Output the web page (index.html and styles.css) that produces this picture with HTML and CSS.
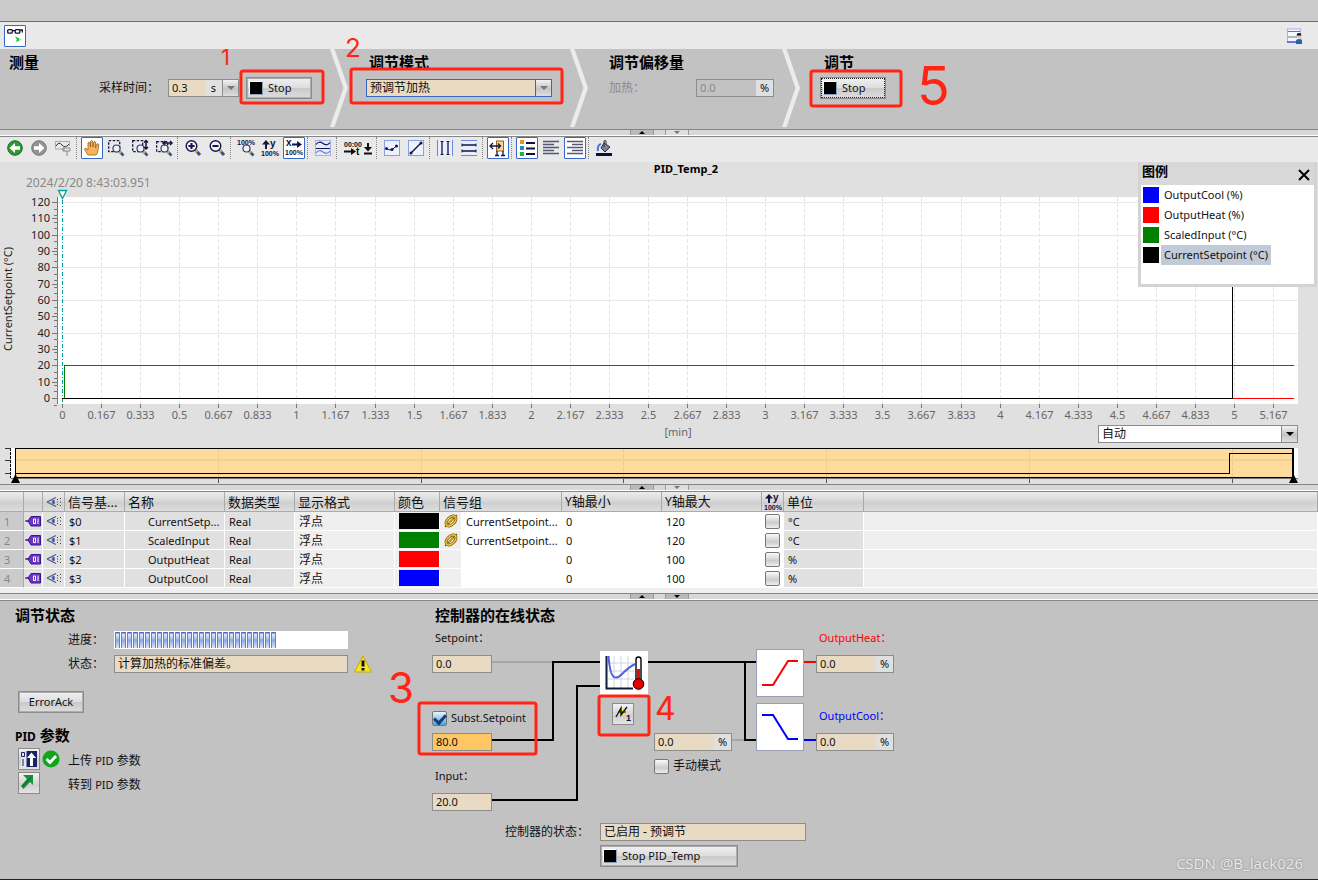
FILE: index.html
```html
<!DOCTYPE html>
<html lang="zh-CN">
<head>
<meta charset="utf-8">
<title>PID_Temp_2</title>
<link rel="stylesheet" href="styles.css">
</head>
<body>
<div class="strip"></div>
<header class="topbar">
  <button class="tool on" aria-label="监视"><svg width="16" height="16"><g fill="none" stroke="#10103c" stroke-width="1.3"><rect x=".7" y="1.6" width="4.600" height="3.600" rx="1"/><rect x="8.2" y="1.6" width="4.600" height="3.600" rx="1"/><path d="M5 2.600h3M12.800 2h2.500v2.500"/></g><path d="M8 8.500l7 3-7 3.500 2-3.200z" fill="#c5d5cc"/><path d="M8 8.500l4 1.700v2.600L9 13.500l1-2z" fill="#18c832"/></svg></button>
  <button class="tool" aria-label="用户视图"><svg width="16" height="16"><rect x="1.500" y="1" width="13" height="13" fill="#f4f7ff" stroke="#a5b2e6"/><path d="M2 3.500h12M2 9h9" stroke="#6c7896"/><path d="M1 14h14" stroke="#4658d0" stroke-width="1.500"/><circle cx="13" cy="8" r="2.400" fill="#eec48f"/><path d="M10.600 7.500a2.400 2.400 0 0 1 4.800 0z" fill="#10103c"/><path d="M10 16v-3q0-2 3-2t3 2v3z" fill="#1d68a6"/></svg></button>
</header>

<main>
<section class="steps">
  <div class="step first">
    <h2>测量</h2>
    <div class="line">
      <label for="sample" class="cjk">采样时间：</label>
      <div class="field sample"><input id="sample" value="0.3"><span class="unit">s</span><button class="drop" aria-label="展开"><i class="tri"></i></button></div>
      <button class="btn stop"><i class="square"></i>Stop</button>
    </div>
  </div>
  <svg class="chevron" width="18" height="78"><path d="M0 0h4.500L18 39 4.500 78H0L13.500 39z"/></svg>
  <div class="step mode">
    <h2>调节模式</h2>
    <div class="combo blue"><select aria-label="调节模式"><option>预调节加热</option></select><span class="drop"><i class="tri"></i></span></div>
  </div>
  <svg class="chevron" width="18" height="78"><path d="M0 0h4.500L18 39 4.500 78H0L13.500 39z"/></svg>
  <div class="step offset">
    <h2>调节偏移量</h2>
    <div class="line"><label for="off" class="cjk">加热：</label><div class="field dim"><input id="off" value="0.0" disabled><span class="unit">%</span></div></div>
  </div>
  <svg class="chevron" width="18" height="78"><path d="M0 0h4.500L18 39 4.500 78H0L13.500 39z"/></svg>
  <div class="step tune">
    <h2>调节</h2>
    <button class="btn stop focus"><i class="square"></i>Stop</button>
  </div>
</section>

<div class="splitter"><button aria-label="向上"><i class="tri up"></i></button><button class="pale" aria-label="向下"><i class="tri"></i></button></div>

<nav class="tools">
  <button class="tool" aria-label="后退"><svg width="16" height="16"><circle cx="8" cy="8" r="7.300" fill="#2f9a35" stroke="#176c1e"/><path d="M2.500 8L8 3v3.200h5v3.600H8V13z" fill="#fff"/></svg></button>
  <button class="tool" aria-label="前进"><svg width="16" height="16"><circle cx="8" cy="8" r="7.300" fill="#939393" stroke="#777"/><path d="M13.500 8L8 3v3.200H3v3.600h5V13z" fill="#fff"/></svg></button>
  <button class="tool" aria-label="固定曲线"><svg width="16" height="16" fill="none"><path d="M0 1.500h15M.500 1v8H8M14.500 1v5" stroke="#aaa"/><path d="M1 6q3-5 6-1t7-1" stroke="#333"/><path d="M8 8h7v3H8zM9 8v3M12 11v5" stroke="#888"/></svg></button>
  <i class="sep"></i>
  <button class="tool on" aria-label="移动"><svg width="16" height="16"><path d="M4 15L.500 9.500q0-1.500 1.500-1L4 10V3q1-1.500 2 0l.600 4V1.200q1-1.500 2 0L9 7l.800-5q1.200-1.200 1.900.200L11.400 8l1.600-4q1.400-.700 1.700.500L14 10q0 3-2 5z" fill="#f4b659" stroke="#9a5f16" stroke-width=".800"/></svg></button>
  <button class="tool" aria-label="框选缩放"><svg width="16" height="16"><rect x=".700" y=".700" width="11" height="11" fill="none" stroke="#151547" stroke-width="1.300" stroke-dasharray="2.500 1.500"/><use href="#lens"/></svg></button>
  <button class="tool" aria-label="垂直缩放"><svg width="16" height="16"><rect x=".700" y=".700" width="10" height="11" fill="none" stroke="#151547" stroke-width="1.300" stroke-dasharray="2.500 1.500"/><use href="#lens"/><path d="M14 0v9M12 2.500L14 .500l2 2M12 7l2 2 2-2" stroke="#151547" stroke-width="1.500" fill="none"/></svg></button>
  <button class="tool" aria-label="水平缩放"><svg width="16" height="16"><rect x=".700" y="1.700" width="11" height="10" fill="none" stroke="#151547" stroke-width="1.300" stroke-dasharray="2.500 1.500"/><use href="#lens"/><path d="M7 3h9M9 1L7 3l2 2M14 1l2 2-2 2" stroke="#151547" stroke-width="1.500" fill="none"/></svg></button>
  <i class="sep"></i>
  <button class="tool" aria-label="放大"><svg width="16" height="16"><path d="M11 10.500l4 4.500" stroke="#24529c" stroke-width="3"/><path d="M10 9.500l2.500 2.700" stroke="#e7a23b" stroke-width="2.500"/><circle cx="6.500" cy="6" r="5.300" fill="#edf2fb" stroke="#151547" stroke-width="1.400"/><path d="M3.500 6h6M6.500 3v6" stroke="#151547" stroke-width="2"/></svg></button>
  <button class="tool" aria-label="缩小"><svg width="16" height="16"><path d="M11 10.500l4 4.500" stroke="#24529c" stroke-width="3"/><path d="M10 9.500l2.500 2.700" stroke="#e7a23b" stroke-width="2.500"/><circle cx="6.500" cy="6" r="5.300" fill="#edf2fb" stroke="#151547" stroke-width="1.400"/><path d="M3.500 6h6" stroke="#151547" stroke-width="2"/></svg></button>
  <i class="sep"></i>
  <button class="tool" aria-label="全部显示"><svg width="16" height="16"><text x="-1" y="5" class="pix">100%</text><use href="#lens"/></svg></button>
  <button class="tool" aria-label="Y轴缩放"><svg width="16" height="16"><use href="#yscale"/><text x="8" y="7" class="pixy">y</text><text x="-1" y="16" class="pix">100%</text></svg></button>
  <button class="tool on" aria-label="X轴缩放"><svg width="16" height="16"><text x="0" y="6" class="pixy">x</text><path d="M6 4.500h6" stroke="#151547" stroke-width="2"/><path d="M11 1l5 3.500L11 8z" fill="#151547"/><text x="-1" y="15" class="pix">100%</text></svg></button>
  <i class="sep"></i>
  <button class="tool" aria-label="分开曲线"><svg width="16" height="16"><rect x=".500" y=".500" width="15" height="15" fill="#e6ecfc" stroke="#a3b2e4"/><path d="M1 4.500q3-4 7-1t7-1M1 8.500h14" stroke="#151547" stroke-width="1.200" fill="none"/><path d="M1 13q3-4 7-1t7-1" stroke="#6a7de0" stroke-width="1.200" fill="none"/></svg></button>
  <i class="sep"></i>
  <button class="tool wide" aria-label="时间格式"><svg width="28" height="16"><text x="0" y="7" class="pix dark">00:00</text><path d="M0 11.500h8" stroke="#111" stroke-width="2"/><path d="M7 8l5 3.500L7 15z" fill="#111"/><text x="12" y="15" class="pixy dark">t</text><path d="M24 3v5M20 13.500h8" stroke="#111" stroke-width="2"/><path d="M20 7h8l-4 4.500z" fill="#111"/></svg></button>
  <i class="sep"></i>
  <button class="tool" aria-label="点连线"><svg width="16" height="16"><rect x=".500" y=".500" width="15" height="15" fill="#edf2ff" stroke="#8b9de2"/><path d="M2 8.500l4 1.500 3-1 4-3.500" stroke="#151547" fill="none"/><g fill="#151547"><circle cx="2.500" cy="8.500" r="1.500"/><circle cx="8" cy="9.500" r="1.500"/><circle cx="12.500" cy="6" r="1.500"/></g></svg></button>
  <button class="tool" aria-label="直线"><svg width="16" height="16"><rect x=".500" y=".500" width="15" height="15" fill="#edf2ff" stroke="#8b9de2"/><path d="M3 13L13 3" stroke="#151547" stroke-width="1.500"/><circle cx="3" cy="13" r="1.500" fill="#151547"/><circle cx="13" cy="3" r="1.500" fill="#151547"/></svg></button>
  <i class="sep"></i>
  <button class="tool" aria-label="垂直标尺"><svg width="16" height="16"><rect x="1" width="14" height="16" fill="#e8eefc"/><path d="M5 1v14M11 1v14" stroke="#151547" stroke-width="1.300"/><path d="M.500 0v16M15.500 0v16" stroke="#6f84de"/><path d="M3.500 1.500h3M9.500 1.500h3M3.500 14.500h3M9.500 14.500h3" stroke="#151547"/></svg></button>
  <button class="tool" aria-label="水平标尺"><svg width="16" height="16"><rect width="16" height="16" fill="#e8eefc"/><path d="M0 .500h16M0 15.500h16" stroke="#6f84de"/><path d="M1 5h14M1 11h14" stroke="#151547" stroke-width="1.300"/><path d="M1 3.500v3M15 3.500v3M1 9.500v3M15 9.500v3" stroke="#151547"/></svg></button>
  <i class="sep"></i>
  <button class="tool on" aria-label="移动标尺"><svg width="16" height="16"><rect x="6.500" y="1" width="7" height="10" fill="#fbd58d" stroke="#8c6228"/><path d="M0 6h10M3 3L0 6l3 3M8 3.500L10.500 6 8 8.500M7 11v4M13 11v4M5 15.500h4M11 15.500h4" stroke="#151547" stroke-width="1.300" fill="none"/></svg></button>
  <i class="sep"></i>
  <button class="tool on" aria-label="图例"><svg width="16" height="16"><path fill="#ee8c2c" d="M1 0h4v4H1z"/><path fill="#258bd0" d="M1 6h4v4H1z"/><path fill="#18b546" d="M1 12h4v4H1z"/><path d="M7 3h9M7 8.500h9M7 14h9" stroke="#10103c" stroke-width="2"/></svg></button>
  <button class="tool" aria-label="左对齐"><svg width="16" height="16"><path d="M0 1.500h16M0 4.500h11M0 7.500h16M0 10.500h11M0 13.500h16" stroke="#555673" stroke-width="1.600"/></svg></button>
  <button class="tool on" aria-label="右对齐"><svg width="16" height="16"><path d="M0 1.500h16M5 4.500h11M0 7.500h16M5 10.500h11M0 13.500h16" stroke="#555673" stroke-width="1.600"/></svg></button>
  <i class="sep"></i>
  <button class="tool" aria-label="背景色"><svg width="16" height="16"><path d="M8 3l6 4-5 5-4-4z" fill="#7e8292" stroke="#2c2e40"/><path d="M8 7V1q1-1 2 0v3" stroke="#2c2e40" fill="none"/><path d="M2 11Q1 5 5 4" stroke="#4b78df" stroke-width="2" fill="none"/><path d="M0 14.500h16" stroke="#10103c" stroke-width="3"/></svg></button>
</nav>

<section class="chart">
  <svg id="plot" class="plot" role="img" aria-label="PID_Temp_2"></svg>
  <div class="under">
    <span class="minutes">[min]</span>
    <div class="combo"><select aria-label="时间范围"><option>自动</option></select><span class="drop"><i class="tri ink"></i></span></div>
  </div>
  <svg id="overview" class="overview" role="img" aria-label="时间轴"></svg>
  <aside class="legend">
    <header><h3>图例</h3><button aria-label="关闭"><svg width="12" height="12"><path d="M1 1l10 10M11 1L1 11" stroke="#000" stroke-width="2"/></svg></button></header>
    <ul>
      <li><i class="blue-bg"></i><span>OutputCool (%)</span></li>
      <li><i class="red-bg"></i><span>OutputHeat (%)</span></li>
      <li><i class="green-bg"></i><span>ScaledInput (°C)</span></li>
      <li class="chosen"><i class="black-bg"></i><span>CurrentSetpoint (°C)</span></li>
    </ul>
  </aside>
</section>

<div class="splitter"><button aria-label="向上"><i class="tri up"></i></button><button class="pale" aria-label="向下"><i class="tri"></i></button></div>

<div class="signals">
<table>
  <colgroup><col class="w24"><col class="w19"><col class="w22"><col class="w60"><col class="w100"><col class="w70"><col class="w100"><col class="w45"><col class="w22"><col class="w100"><col class="w100"><col class="w100"><col class="w22"><col class="w80"><col></colgroup>
  <thead><tr><th></th><th></th><th><svg class="ico" width="16" height="14"><use href="#eye"/></svg></th><th>信号基...</th><th>名称</th><th>数据类型</th><th>显示格式</th><th>颜色</th><th colspan="2">信号组</th><th><span class="lat">Y</span>轴最小</th><th><span class="lat">Y</span>轴最大</th><th><svg class="ico" width="16" height="16"><use href="#yscale"/><text x="8" y="7" class="pixy">y</text><text x="-1" y="16" class="pix">100%</text></svg></th><th>单位</th><th></th></tr></thead>
  <tbody>
    <tr><td class="no">1</td><td><svg class="ico" width="16" height="12"><use href="#tag"/></svg></td><td><svg class="ico" width="16" height="14"><use href="#eye"/></svg></td><td>$0</td><td class="name">CurrentSetp...</td><td>Real</td><td class="cjk lite">浮点</td><td class="lite"><i class="swatch black-bg"></i></td><td class="lite"><svg class="ico" width="16" height="14"><use href="#link"/></svg></td><td class="edit">CurrentSetpoint...</td><td class="edit">0</td><td class="edit">120</td><td class="edit tick"><input type="checkbox" aria-label="缩放 1"></td><td>°C</td><td class="lite"></td></tr>
    <tr><td class="no">2</td><td><svg class="ico" width="16" height="12"><use href="#tag"/></svg></td><td><svg class="ico" width="16" height="14"><use href="#eye"/></svg></td><td>$1</td><td class="name">ScaledInput</td><td>Real</td><td class="cjk lite">浮点</td><td class="lite"><i class="swatch green-bg"></i></td><td class="lite"><svg class="ico" width="16" height="14"><use href="#link"/></svg></td><td class="edit">CurrentSetpoint...</td><td class="edit">0</td><td class="edit">120</td><td class="edit tick"><input type="checkbox" aria-label="缩放 2"></td><td>°C</td><td class="lite"></td></tr>
    <tr><td class="no">3</td><td><svg class="ico" width="16" height="12"><use href="#tag"/></svg></td><td><svg class="ico" width="16" height="14"><use href="#eye"/></svg></td><td>$2</td><td class="name">OutputHeat</td><td>Real</td><td class="cjk lite">浮点</td><td class="lite"><i class="swatch red-bg"></i></td><td class="lite"></td><td class="edit"></td><td class="edit">0</td><td class="edit">100</td><td class="edit tick"><input type="checkbox" aria-label="缩放 3"></td><td>%</td><td class="lite"></td></tr>
    <tr><td class="no">4</td><td><svg class="ico" width="16" height="12"><use href="#tag"/></svg></td><td><svg class="ico" width="16" height="14"><use href="#eye"/></svg></td><td>$3</td><td class="name">OutputCool</td><td>Real</td><td class="cjk lite">浮点</td><td class="lite"><i class="swatch blue-bg"></i></td><td class="lite"></td><td class="edit"></td><td class="edit">0</td><td class="edit">100</td><td class="edit tick"><input type="checkbox" aria-label="缩放 4"></td><td>%</td><td class="lite"></td></tr>
  </tbody>
</table>
</div>

<div class="splitter"><button aria-label="向上"><i class="tri up"></i></button><button aria-label="向下"><i class="tri ink"></i></button></div>

<section class="lower">
  <div class="status">
    <h2>调节状态</h2>
    <div class="rows">
      <label for="prog" class="cjk">进度：</label><progress id="prog" value="70" max="100"></progress><span></span>
      <label for="state" class="cjk">状态：</label><div class="field"><input id="state" class="cjk" value="计算加热的标准偏差。" readonly></div>
      <svg width="18" height="18"><path d="M9 1l8.500 16H.500z" fill="#f7e718" stroke="#c9a800"/><path d="M9 5.500v6" stroke="#10103c" stroke-width="3"/><path d="M9 13v2.500" stroke="#10103c" stroke-width="3"/></svg>
    </div>
    <button class="btn ack">ErrorAck</button>
    <h2><small>PID</small> 参数</h2>
    <div class="action"><button class="mini" aria-label="上传 PID 参数"><svg width="16" height="16"><rect width="16" height="16" fill="#e4e7f0"/><path d="M5.500 0H16v16H5.500z" fill="#1b2260"/><path d="M.500 1.500h3v4h-3zM2 8v7" stroke="#1b2260" fill="none"/><path d="M10.500 1.500l4.500 5.500h-3v8H9V7H6z" fill="#fff"/></svg></button>
      <svg width="18" height="18"><circle cx="9" cy="9" r="8.500" fill="#12a51e"/><path d="M4.500 9l3.500 3.500L14 6" stroke="#fff" stroke-width="2.800" fill="none"/></svg><span class="cjk">上传 <small>PID</small> 参数</span></div>
    <div class="action"><button class="mini" aria-label="转到 PID 参数"><svg width="16" height="16"><path d="M2 0h10v10L9 7l-6.500 7L0 11l6-7z" fill="#16903a"/><path d="M1 12L10 2" stroke="#0b6324"/></svg></button><span></span><span class="cjk">转到 <small>PID</small> 参数</span></div>
  </div>

  <div class="controller">
    <h2>控制器的在线状态</h2>
    <div class="diagram">
      <svg class="wires" width="480" height="200" fill="none" stroke-width="2">
        <path d="M72 37h60M312 115h12" stroke="#a6a6a6"/>
        <path d="M72 115h61V37h47M72 175h85V61h23M228 37h108M325 37v78h11" stroke="#000"/>
        <path d="M384 37h12" stroke="#f00"/><path d="M384 115h12" stroke="#00f"/>
      </svg>
      <label class="n-sp" for="sp">Setpoint：</label><div class="field short n-spf"><input id="sp" value="0.0"></div>
      <label class="check n-sub"><input type="checkbox" checked>Subst.Setpoint</label>
      <div class="field short hot n-subf"><input aria-label="Subst.Setpoint" value="80.0"></div>
      <label class="n-in" for="inp">Input：</label><div class="field short n-inf"><input id="inp" value="20.0"></div>
      <svg class="n-pid" width="48" height="44"><path fill="#fff" d="M0 0h48v44H0z"/><path d="M8 12h26M8 20h26M8 28h26M14 5v32M21 5v32M28 5v32" stroke="#ccd4e2"/><path d="M6.500 5v32.500H33" stroke="#101c3a" stroke-width="2" fill="none"/><path d="M8.500 5Q10 24 14 26q3 2 8-3 7-7 13-10" stroke="#5562d4" stroke-width="2" fill="none"/><rect x="36" y="6" width="5" height="24" rx="2.500" fill="#fff" stroke="#000" stroke-width="1.400"/><path d="M38.500 18v13" stroke="#f00" stroke-width="3"/><circle cx="38.500" cy="33" r="5.300" fill="#e80000" stroke="#000"/></svg>
      <button class="mini n-flash" aria-label="预调节"><svg width="18" height="18"><path d="M5 7l4-3 1 3 2 1-3 3-1-2-2-1z" fill="#f6e800"/><path d="M2 12L7 3v7l6-8" fill="none" stroke="#111" stroke-width="1.300"/><path d="M4 7h8" stroke="#111"/><text x="12" y="16" class="one">1</text></svg></button>
      <div class="field n-man"><input aria-label="手动输出" value="0.0"><span class="unit">%</span></div>
      <label class="check cjk n-manc"><input type="checkbox">手动模式</label>
      <svg class="n-heat" width="48" height="48"><rect x=".500" y=".500" width="47" height="47" fill="#fff" stroke="#9aa0b8"/><path d="M6 36h11l15-24h10" stroke="#f00" stroke-width="2" fill="none"/></svg>
      <svg class="n-cool" width="48" height="48"><rect x=".500" y=".500" width="47" height="47" fill="#fff" stroke="#9aa0b8"/><path d="M6 12h11l15 24h10" stroke="#00f" stroke-width="2" fill="none"/></svg>
      <label class="n-hl" for="oh">OutputHeat：</label><div class="field n-hf"><input id="oh" value="0.0"><span class="unit">%</span></div>
      <label class="n-cl" for="oc">OutputCool：</label><div class="field n-cf"><input id="oc" value="0.0"><span class="unit">%</span></div>
      <label class="cjk n-sl" for="cs">控制器的状态：</label><div class="field n-sf"><input id="cs" class="cjk" value="已启用 - 预调节" readonly></div>
      <button class="btn n-stop"><i class="square"></i>Stop PID_Temp</button>
    </div>
  </div>
  <p class="mark">CSDN @B_lack026</p>
</section>
</main>

<svg class="notes" width="960" height="780" aria-hidden="true">
  <g fill="none" stroke="#ff2413" stroke-width="3"><rect x="241" y="71" width="82" height="32" rx="2"/><rect x="351" y="69" width="211" height="34" rx="2"/><rect x="811" y="71" width="90" height="35" rx="2"/><rect x="419" y="703" width="117" height="51" rx="2"/><rect x="599" y="696" width="50" height="39" rx="2"/></g>
  <g class="hand"><text x="221" y="65" font-size="22">1</text><text x="345" y="57" font-size="26">2</text><text x="388" y="703" font-size="42">3</text><text x="655" y="720" font-size="32">4</text><text x="917" y="105" font-size="54">5</text></g>
</svg>

<svg width="0" height="0" class="defs"><defs>
  <g id="lens"><path d="M11.500 11.500l4 4" stroke="#24529c" stroke-width="2.500"/><path d="M11 11l2 2" stroke="#e7a23b" stroke-width="2.500"/><circle cx="8.500" cy="8.500" r="3.500" fill="#edf2fb" stroke="#333c68" stroke-width="1.200"/></g>
  <g id="yscale"><path d="M4 3v6" stroke="#151547" stroke-width="2"/><path d="M0 4.500L4 0l4 4.500z" fill="#151547"/></g>
  <g id="eye"><path d="M1 7l9-4.500M1 7l9 4.500" stroke="#555b6b" stroke-width="1.200" fill="none"/><path d="M4 7l4-2.500v5z" fill="#a8b8ec"/><ellipse cx="7.500" cy="7" rx="1.300" ry="2.200" fill="#3152c8"/><path d="M11 4.500h1M14 3.500h1M11 7h1M14 7h1M11 9.500h1M14 10.500h1" stroke="#444"/></g>
  <g id="tag"><path d="M1 6h2l3-4.500h9.500v9.500H6L3 6" fill="#6a35c4" stroke="#3d138e"/><path d="M0 6h4" stroke="#3d138e"/><path d="M8.500 4h2v4.500h-2zM13 3.500v5.500" stroke="#fff" fill="none"/></g>
  <g id="link" fill="none" stroke="#8a6508"><path d="M2 13L14 1" stroke-width="1.500"/><ellipse cx="8" cy="7" rx="6" ry="3.600" transform="rotate(-45 8 7)" stroke-width="3"/><ellipse cx="8" cy="7" rx="6" ry="3.600" transform="rotate(-45 8 7)" stroke="#f2ca4c" stroke-width="1.400"/><path d="M6 9l4-4" stroke="#c29a24" stroke-width="2"/></g>
</defs></svg>
<script src="chart.js"></script>
</body>
</html>
```
FILE: styles.css
```css
* { box-sizing: border-box; }
body {
  margin: 0;
  min-height: 100vh;
  display: flex;
  flex-direction: column;
  position: relative;
  overflow-x: hidden;
  background: #c2c2c2;
  color: #111;
  font: 11px/16px "Noto Sans", "Noto Sans CJK SC", sans-serif;
}
main { flex: 1; display: flex; flex-direction: column; }
h2, h3, p, ul { margin: 0; padding: 0; }
h2 { font: bold 15px/20px "Noto Sans", "Noto Sans CJK SC", sans-serif; color: #000; }
h2 small { font-size: 12px; }
small { font-size: 11px; }
button, input, select { font: inherit; color: inherit; margin: 0; padding: 0; }
svg { display: block; overflow: visible; }
.cjk { font-size: 12px; }

.strip { height: 22px; background: #cbcbcb; border-bottom: 1px solid #6f6f6f; }
.topbar { height: 27px; padding: 0 12px 0 3px; background: #e9e9e9; display: flex; align-items: center; justify-content: space-between; }

.tool { width: 22px; height: 22px; margin: 0 1px; border: 1px solid transparent; background: none; display: flex; align-items: center; justify-content: center; flex: none; }
.tool.on { background: #fff; border-color: #3568c8; border-radius: 1px; }
.tool.wide { width: 33px; }
.tools { height: 25px; padding-left: 3px; background: #e9e9e9; display: flex; align-items: flex-start; }
.sep { width: 1px; height: 22px; margin: 0 3px 0 1px; border-left: 1px dotted #888; }
.pix { font: bold 7px "Liberation Sans", sans-serif; fill: #10103c; }
.pixy { font: bold 10px "Liberation Sans", sans-serif; fill: #10103c; }
.dark { fill: #111; }

.steps { height: 80px; display: flex; background: #c2c2c2; }
.step { padding-top: 3px; }
.first { width: 330px; padding-left: 9px; }
.mode { width: 222px; padding-left: 18px; }
.mode h2 { padding-left: 3px; }
.offset { width: 194px; padding-left: 21px; }
.tune { flex: 1; padding-left: 20px; }
.tune h2 { padding-left: 4px; }
.chevron { flex: none; fill: #ececec; }
.line { display: flex; align-items: center; height: 32px; }
.first .line { padding-left: 90px; }
.first .line label { width: 69px; }
.sample { width: 71px; margin-right: 7px; }
.mode .combo { width: 186px; margin-top: 7px; }
.offset .line label { width: 87px; color: #8a8a8a; }
.offset .field { width: 78px; }
.tune .btn { margin-top: 5px; }

.field { display: flex; height: 18px; border: 1px solid #8c8c8c; background: #e8dac3; }
.field input { flex: 1; min-width: 0; width: 0; border: 0; background: none; padding: 0 3px; outline: 0; line-height: 16px; }
.unit { width: 17px; background: #e0e0e0; text-align: center; flex: none; }
.dim { background: #c2c2c2; }
.dim input { color: #8a8a8a; }
.hot { background: #ffc664; }
.drop { width: 16px; border: 0; border-left: 1px solid #8c8c8c; background: linear-gradient(#f2f2f2, #c4c4c4 55%, #dedede); display: flex; align-items: center; justify-content: center; flex: none; }
.tri { border: 4px solid transparent; border-top-color: #777; border-bottom: 0; }
.tri.up { border: 4px solid transparent; border-bottom-color: #000; border-top: 0; }
.tri.ink { border-top-color: #000; }
.combo { display: flex; height: 18px; position: relative; border: 1px solid #8c8c8c; background: #fff; }
.combo select { flex: 1; appearance: none; border: 0; background: none; padding: 0 3px; font-size: 12px; line-height: 16px; outline: 0; }
.combo .drop { pointer-events: none; }
.blue { border-color: #3568c8; background: #e8dac3; }
.blue .drop { border-color: #3568c8; }

.btn { height: 22px; border: 1px solid #8c8c8c; outline: 1px solid #adadad; outline-offset: -2px; background: linear-gradient(#f0f0f0, #dedede 48%, #cacaca 52%, #dedede); display: flex; align-items: center; }
.stop { width: 66px; }
.square { width: 14px; height: 14px; margin: 0 5px 0 2px; background: #000; border: 1px solid #fff; border-right-color: #8aa0b8; border-bottom-color: #8aa0b8; }
.focus { border: 1px solid #8c8c8c; outline: 1px dotted #222; outline-offset: -2px; }

.splitter { height: 8px; border-top: 1px solid #868686; border-bottom: 1px solid #868686; background: #d8d8d8; box-shadow: inset 0 -1px #fff; display: flex; justify-content: center; gap: 11px; }
.splitter button { width: 24px; height: 5px; border: 1px solid #999; border-width: 0 1px; background: #bababa; display: flex; align-items: center; justify-content: center; }
.splitter .tri { border-width: 3px; }
.splitter .tri.up { border-top-width: 0; }
.splitter .tri:not(.up) { border-bottom-width: 0; }
.splitter .pale { background: #dedede; }

.chart { position: relative; background: #e0e0e0; }
.plot { width: 100%; height: 262px; }
.overview { width: 100%; height: 36px; }
.under { height: 24px; padding: 0 20px 0 58px; display: grid; grid-template-columns: 200px 1fr 200px; }
.minutes { grid-column: 2; text-align: center; color: #666; }
.under .combo { margin-top: 1px; }
.plot text { font-size: 11px; fill: #222; }
.plot .xlab { fill: #666; text-anchor: middle; }
.plot .ylab { text-anchor: end; }
.plot .title { font-weight: bold; text-anchor: middle; fill: #000; }
.plot .date { font-size: 12px; fill: #888; }
.plot .mid { text-anchor: middle; }

.legend { position: absolute; top: 0; right: 1px; width: 179px; height: 125px; border: 3px solid #d3d3d3; border-top: 0; background: #fff; }
.legend header { height: 23px; padding: 0 4px 0 1px; background: #d8d8d8; display: flex; justify-content: space-between; }
.legend h3 { font-size: 13px; line-height: 18px; color: #000; }
.legend button { border: 0; background: none; padding-top: 2px; }
.legend ul { list-style: none; }
.legend li { display: flex; align-items: center; height: 20px; padding-left: 2px; }
.legend li i { width: 16px; height: 16px; margin-right: 2px; }
.legend li span { padding: 0 3px; line-height: 20px; }
.chosen span { background: #c1cbd8; }
.blue-bg { background: #00f; }
.red-bg { background: #f00; }
.green-bg { background: #008000; }
.black-bg { background: #000; }

.signals { background: #efefef; padding-bottom: 5px; }
table { width: 100%; table-layout: fixed; border-collapse: separate; border-spacing: 0; }
.w19 { width: 19px; } .w22 { width: 22px; } .w24 { width: 24px; } .w45 { width: 45px; } .w60 { width: 60px; }
.w70 { width: 70px; } .w80 { width: 80px; } .w100 { width: 100px; }
th { height: 19px; padding: 0 3px; border-right: 1px solid #aaa; border-bottom: 1px solid #aaa; background: linear-gradient(#ececec, #d6d6d6 50%, #cdcdcd 52%, #dedede); font-size: 13px; font-weight: normal; line-height: 18px; text-align: left; white-space: nowrap; overflow: hidden; }
th .lat { font-size: 12px; }
td { height: 19px; padding: 0 4px; line-height: 17px; border-right: 1px solid #fff; border-bottom: 1px solid #fff; background: #e0e0e0; white-space: nowrap; overflow: hidden; }
td.no { background: #cbcbcb; color: #888; border-right-color: #aaa; }
td.name { padding: 0 0 0 23px; }
td.lite { background: #efefef; padding: 0 4px; }
td.edit { background: #fff; }
td.edit.tick { padding: 0 3px; }
th .ico, td .ico { margin: 0 auto; }
th:has(.ico), td:has(.ico) { padding: 0 1px; }
.swatch { display: block; width: 40px; height: 16px; }
input[type="checkbox"] { appearance: none; display: block; flex: none; width: 15px; height: 15px; border: 1px solid #777; border-radius: 2px; background: linear-gradient(#fafafa, #ccc 60%, #eee); }
input[type="checkbox"]:checked { background: linear-gradient(#e8f6fd, #49a4d8); display: grid; place-items: center; }
input[type="checkbox"]:checked::after { content: ""; width: 5px; height: 9px; border: solid #123f78; border-width: 0 3px 3px 0; transform: rotate(42deg); }

.lower { flex: 1; display: flex; position: relative; border-bottom: 1px solid #20222e; }
.status { width: 420px; padding: 4px 0 0 15px; }
.rows { display: grid; grid-template-columns: 47px 234px 18px; column-gap: 6px; row-gap: 6px; padding: 6px 0 0 46px; align-items: center; }
.rows label { padding-left: 7px; white-space: nowrap; }
progress { appearance: none; width: 234px; height: 18px; padding: 1px; border: 0; background: #fff; }
progress::-webkit-progress-bar { background: #fff; }
progress::-webkit-progress-value { background: linear-gradient(90deg, #6083cf 0 1px, transparent 1px 4px, #6083cf 4px 5px, #fff 5px) 0 0 / 6px 100%, linear-gradient(#4668c0 0 1px, #e4ecfd 2px, #b8cbf5 6px, #8ba9e8 8px, #dce6fc); }
.ack { width: 66px; margin: 18px 0 12px 3px; justify-content: center; }
.action { display: grid; grid-template-columns: 21px 18px 1fr; column-gap: 3px; align-items: center; height: 24px; padding-left: 3px; }
.action:first-of-type { margin-top: 2px; }
.action > .cjk { padding: 4px 0 0 5px; }
.mini { width: 22px; height: 22px; border: 1px solid #8c8c8c; background: linear-gradient(#f2f2f2, #d0d0d0 60%, #e4e4e4); display: flex; align-items: center; justify-content: center; }
.one { font: bold 9px "Liberation Sans", sans-serif; fill: #10103c; }

.controller { flex: 1; padding-top: 4px; }
.controller h2 { padding-left: 15px; }
.diagram { position: relative; width: 500px; height: 246px; }
.diagram > * { position: absolute; white-space: nowrap; }
.wires { left: 0; top: 0; }
.short { width: 60px; }
.check { display: flex; align-items: center; gap: 4px; }
.n-sp { left: 15px; top: 5px; }
.n-spf { left: 12px; top: 30px; }
.n-sub { left: 12px; top: 85px; }
.n-subf { left: 12px; top: 108px; }
.n-in { left: 15px; top: 143px; }
.n-inf { left: 12px; top: 168px; }
.n-pid { left: 180px; top: 26px; }
.n-flash { left: 192px; top: 78px; }
.n-man { left: 234px; top: 108px; width: 78px; }
.n-manc { left: 234px; top: 133px; }
.n-heat { left: 336px; top: 24px; }
.n-cool { left: 336px; top: 78px; }
.n-hl { left: 399px; top: 5px; color: #f00; }
.n-hf { left: 396px; top: 30px; width: 78px; }
.n-cl { left: 399px; top: 83px; color: #00f; }
.n-cf { left: 396px; top: 108px; width: 78px; }
.n-sl { left: 85px; top: 199px; }
.n-sf { left: 180px; top: 198px; width: 206px; }
.n-stop { left: 180px; top: 220px; width: 138px; }
.mark { position: absolute; right: 15px; bottom: 7px; font-size: 15px; line-height: 18px; color: #e9e9e9; text-shadow: 0 0 2px #777; }

.notes { position: absolute; left: 0; top: 0; pointer-events: none; }
.hand { font-family: Inter, sans-serif; font-weight: 400; fill: #ff2413; }
.defs { position: absolute; }
```
FILE: chart.js
```js
const NS = "http://www.w3.org/2000/svg";
const END = 5.256;
const STEP_AT = 4.992;

function add(svg, tag, attrs, text) {
  const el = document.createElementNS(NS, tag);
  for (const key in attrs) el.setAttribute(key, attrs[key]);
  if (text !== undefined) el.textContent = text;
  svg.appendChild(el);
}

function line(svg, d, stroke, dash) {
  add(svg, "path", { d, stroke, fill: "none", "stroke-dasharray": dash || "none", "shape-rendering": "crispEdges" });
}

function drawPlot() {
  const svg = document.getElementById("plot");
  svg.replaceChildren();
  const width = svg.clientWidth;
  const right = width - 20;
  const x = m => Math.round(62 + m * (right - 66) / END) + 0.5;
  const y = v => Math.round(236 - v * 196 / 120) + 0.5;

  add(svg, "rect", { x: 58, y: 35, width: right - 58, height: 207, fill: "#fff" });
  for (let v = 0; v <= 120; v += 20) line(svg, `M58 ${y(v)}H${right}`, "#e9e9e9");
  for (let k = 0; k <= 31; k++) {
    const px = x(k / 6);
    if (k) line(svg, `M${px} 35V242`, "#e6e6e6", "4 2");
    line(svg, `M${px} 242v4`, "#777");
    add(svg, "text", { x: px, y: 257, class: "xlab" }, String(Number((k / 6).toFixed(3))));
  }
  line(svg, "M57.5 35V242", "#777");
  for (let k = -1; k <= 30; k++) line(svg, `M54 ${y(k * 4)}H57`, "#777");
  for (let v = 0; v <= 120; v += 10) {
    line(svg, `M52 ${y(v)}H57`, "#777");
    add(svg, "text", { x: 50, y: y(v) + 3.5, class: "ylab" }, v);
  }
  line(svg, "M62.500 38V242", "#00a0a0", "4 2 1 2");
  add(svg, "path", { d: "M58.5 28.5h8l-4 8z", fill: "#fff", stroke: "#00a0a0", "stroke-width": 1.3 });
  line(svg, `M${x(STEP_AT)} ${y(0)}H${right - 4}`, "#f00");
  line(svg, `M64.500 ${y(0)}V${y(20)}H${right - 4}`, "#008000");
  line(svg, `M62 ${y(0)}H${x(STEP_AT)}V${y(80)}`, "#000");
  add(svg, "text", { x: 26, y: 25, class: "date" }, "2024/2/20 8:43:03.951");
  add(svg, "text", { x: (58 + width) / 2 - 2, y: 11, class: "title" }, "PID_Temp_2");
  add(svg, "text", { transform: "translate(12 137) rotate(-90)", class: "mid" }, "CurrentSetpoint (°C)");
}

function drawOverview() {
  const svg = document.getElementById("overview");
  svg.replaceChildren();
  const right = svg.clientWidth - 25;
  const tick = k => Math.round(15 + k * (right - 15) * 0.1587) + 0.5;
  add(svg, "rect", { x: 11, y: 0, width: right - 6, height: 30, fill: "#fff" });
  add(svg, "rect", { x: 15, y: 0, width: right - 15, height: 30, fill: "#ffdb9b" });
  line(svg, `M15 11.500H${right}M15 12.500H${right}`, "#f1d096");
  line(svg, "M10.500 0V30", "#000", "3 1");
  line(svg, "M5 .500h6M5 12.500h6M5 25.500h6", "#333");
  for (let k = 1; k <= 6; k++) {
    line(svg, `M${tick(k)} 1V29`, "#edcb92", "4 2");
    line(svg, `M${tick(k)} 30v5`, "#555");
  }
  line(svg, `M11 30.500H${right + 5}`, "#777");
  line(svg, `M15.500 30V.500H${right}M15 29.500H${right}`, "#000");
  const up = Math.round(right - 64) + 0.5;
  line(svg, `M15 25.500H${up}V5.500H${right}`, "#000");
  line(svg, `M${right - 0.5} 0V30M${right + 0.5} 0V30`, "#000");
  add(svg, "path", { d: "M15.500 26l4.500 9h-9z" });
  add(svg, "path", { d: `M${right + 0.5} 26l4.500 9h-9z` });
}

function draw() {
  drawPlot();
  drawOverview();
}

draw();
window.addEventListener("resize", draw);
```
